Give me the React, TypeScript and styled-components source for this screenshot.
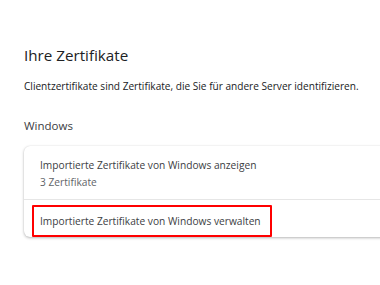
import React from 'react';
import styled, { createGlobalStyle } from 'styled-components';

const GlobalStyle = createGlobalStyle`
  html, body {
    margin: 0;
    padding: 0;
    background: #ffffff;
  }
  body {
    font-family: 'Open Sans', 'Noto Sans', sans-serif;
    color: #202124;
    overflow: hidden;
  }
`;

const Page = styled.div`
  width: 380px;
  height: 285px;
  padding: 44px 0 0 24px;
  box-sizing: border-box;
  overflow: hidden;
`;

const Title = styled.h1`
  margin: 0;
  font-size: 15.2px;
  font-weight: 400;
  line-height: 22px;
  color: #202124;
`;

const Description = styled.p`
  margin: 12px 0 0;
  font-size: 10.1px;
  line-height: 16px;
  color: #202124;
  white-space: nowrap;
`;

const SectionLabel = styled.h2`
  margin: 24px 0 0;
  font-size: 11.5px;
  font-weight: 400;
  line-height: 16px;
  color: #3c4043;
`;

const Card = styled.div`
  margin-top: 12px;
  width: 380px;
  background: #ffffff;
  border-radius: 6px 0 0 6px;
  box-shadow: 0 1px 3px rgba(0, 0, 0, 0.28), 0 0 1px rgba(0, 0, 0, 0.12);
  display: flex;
  flex-direction: column;
`;

const Row = styled.div<{ $divider?: boolean }>`
  display: flex;
  flex-direction: column;
  padding: ${p => (p.$divider ? '5px 16px 0' : '11px 16px 9px')};
  border-top: ${p => (p.$divider ? '1px solid #e6e6e6' : 'none')};
`;

const RowTitle = styled.span`
  align-self: flex-start;
  font-size: 10.2px;
  line-height: 16px;
  color: #3c4043;
`;

const Highlight = styled.div`
  align-self: flex-start;
  margin-left: -8px;
  padding: 6px 9px 6px 6px;
  border: 2px solid #ff0000;
  border-radius: 1px;
  display: flex;
`;

const RowSub = styled.span`
  font-size: 10.2px;
  line-height: 16px;
  color: #5f6368;
  margin-top: 1px;
`;

const App: React.FC = () => {
  return (
    <>
      <GlobalStyle />
      <Page>
        <Title>Ihre Zertifikate</Title>
        <Description>
          Clientzertifikate sind Zertifikate, die Sie für andere Server identifizieren.
        </Description>
        <SectionLabel>Windows</SectionLabel>
        <Card>
          <Row>
            <RowTitle>Importierte Zertifikate von Windows anzeigen</RowTitle>
            <RowSub>3 Zertifikate</RowSub>
          </Row>
          <Row $divider>
            <Highlight>
              <RowTitle>Importierte Zertifikate von Windows verwalten</RowTitle>
            </Highlight>
          </Row>
        </Card>
      </Page>
    </>
  );
};

export default App;
